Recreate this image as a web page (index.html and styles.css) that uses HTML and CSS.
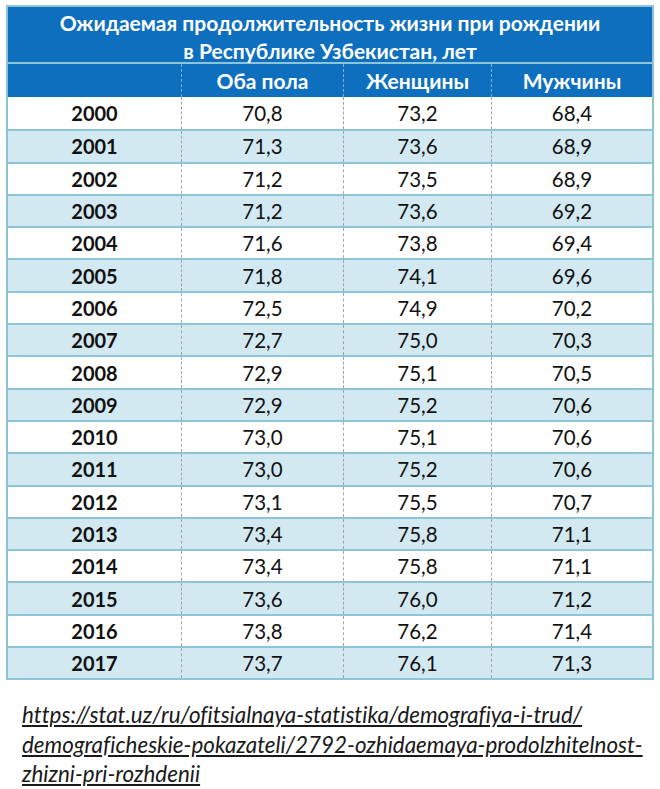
FILE: index.html
```html
<!DOCTYPE html>
<html lang="ru">
<head>
<meta charset="utf-8">
<title>Ожидаемая продолжительность жизни</title>
<link rel="stylesheet" href="styles.css">
</head>
<body>
<div class="page">
  <div class="table">
    <div class="title">Ожидаемая продолжительность жизни при рождении<br>в Республике Узбекистан, лет</div>
    <div class="row head">
      <div class="cell"></div>
      <div class="cell">Оба пола</div>
      <div class="cell">Женщины</div>
      <div class="cell">Мужчины</div>
    </div>
    <div class="row"><div class="cell year">2000</div><div class="cell">70,8</div><div class="cell">73,2</div><div class="cell">68,4</div></div>
    <div class="row alt"><div class="cell year">2001</div><div class="cell">71,3</div><div class="cell">73,6</div><div class="cell">68,9</div></div>
    <div class="row"><div class="cell year">2002</div><div class="cell">71,2</div><div class="cell">73,5</div><div class="cell">68,9</div></div>
    <div class="row alt"><div class="cell year">2003</div><div class="cell">71,2</div><div class="cell">73,6</div><div class="cell">69,2</div></div>
    <div class="row"><div class="cell year">2004</div><div class="cell">71,6</div><div class="cell">73,8</div><div class="cell">69,4</div></div>
    <div class="row alt"><div class="cell year">2005</div><div class="cell">71,8</div><div class="cell">74,1</div><div class="cell">69,6</div></div>
    <div class="row"><div class="cell year">2006</div><div class="cell">72,5</div><div class="cell">74,9</div><div class="cell">70,2</div></div>
    <div class="row alt"><div class="cell year">2007</div><div class="cell">72,7</div><div class="cell">75,0</div><div class="cell">70,3</div></div>
    <div class="row"><div class="cell year">2008</div><div class="cell">72,9</div><div class="cell">75,1</div><div class="cell">70,5</div></div>
    <div class="row alt"><div class="cell year">2009</div><div class="cell">72,9</div><div class="cell">75,2</div><div class="cell">70,6</div></div>
    <div class="row"><div class="cell year">2010</div><div class="cell">73,0</div><div class="cell">75,1</div><div class="cell">70,6</div></div>
    <div class="row alt"><div class="cell year">2011</div><div class="cell">73,0</div><div class="cell">75,2</div><div class="cell">70,6</div></div>
    <div class="row"><div class="cell year">2012</div><div class="cell">73,1</div><div class="cell">75,5</div><div class="cell">70,7</div></div>
    <div class="row alt"><div class="cell year">2013</div><div class="cell">73,4</div><div class="cell">75,8</div><div class="cell">71,1</div></div>
    <div class="row"><div class="cell year">2014</div><div class="cell">73,4</div><div class="cell">75,8</div><div class="cell">71,1</div></div>
    <div class="row alt"><div class="cell year">2015</div><div class="cell">73,6</div><div class="cell">76,0</div><div class="cell">71,2</div></div>
    <div class="row"><div class="cell year">2016</div><div class="cell">73,8</div><div class="cell">76,2</div><div class="cell">71,4</div></div>
    <div class="row alt"><div class="cell year">2017</div><div class="cell">73,7</div><div class="cell">76,1</div><div class="cell">71,3</div></div>
  </div>
  <p class="source"><a href="#">https://stat.uz/ru/ofitsialnaya-statistika/demografiya-i-trud/<br>demograficheskie-pokazateli/2792-ozhidaemaya-prodolzhitelnost-<br>zhizni-pri-rozhdenii</a></p>
</div>
</body>
</html>
```
FILE: styles.css
```css
html, body {
  margin: 0;
  padding: 0;
  background: #ffffff;
}
body {
  font-family: Lato, "Open Sans", "Noto Sans", sans-serif;
  color: #111111;
}
.page {
  padding: 5px 0 0 6px;
}
.table {
  width: 648px;
  box-sizing: border-box;
  border: 2px solid #8ec4d8;
}
.title {
  background: #0f6fbf;
  color: #ffffff;
  font-weight: 700;
  font-size: 21px;
  line-height: 28px;
  text-align: center;
  height: 53px;
  padding-top: 2px;
  border-bottom: 2px solid #8ec4d8;
  box-sizing: content-box;
}
.row {
  display: grid;
  grid-template-columns: 173px 162px 148px 161px;
  height: 32.3px;
  box-sizing: border-box;
}
.row + .row + .row {
  border-top: 2px solid #8ec4d8;
}
.row.alt {
  background: #d3e9f2;
}
.cell {
  display: flex;
  align-items: center;
  justify-content: center;
  font-size: 20.5px;
}
.cell + .cell {
  border-left: 1px dashed #9aa6b6;
}
.year {
  font-weight: 700;
  font-size: 20px;
}
.head {
  background: #0f6fbf;
  color: #ffffff;
  height: 33px;
}
.head .cell {
  font-weight: 700;
  font-size: 21px;
}
.head .cell + .cell {
  border-left: 1px dashed #7fb3df;
}
.source {
  margin: 20px 0 0 16px;
  font-size: 22.4px;
  font-style: italic;
  line-height: 29.5px;
  font-variant-ligatures: none;
  font-feature-settings: "liga" 0, "clig" 0, "dlig" 0;
}
.source a {
  color: #1a1a1a;
  text-decoration: underline;
  text-underline-offset: 2px;
}
```
